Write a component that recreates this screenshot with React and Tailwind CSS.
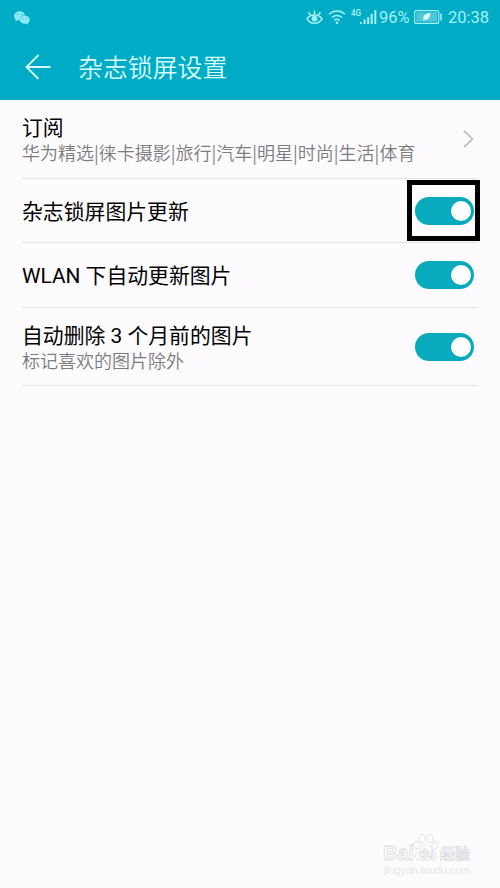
import { useState } from "react";

function StatusBar() {
  return (
    <div className="flex h-[34px] items-center justify-between pl-3.5 pr-[11px] text-[#a5f1f8]">
      <svg width="16" height="14" viewBox="0 0 16 14" className="mt-px">
        <ellipse cx="5.6" cy="4.9" rx="5.6" ry="4.6" fill="#8cecf6" />
        <path d="M1.8 8l-.6 2.5 3-1.5z" fill="#8cecf6" />
        <ellipse cx="10.8" cy="8.7" rx="5.2" ry="4.3" fill="#8cecf6" stroke="#00acc5" strokeWidth="0.5" />
        <path d="M12 12.4l2.3 1.3-.5-2.5z" fill="#8cecf6" />
        <g fill="#30b6ca">
          <circle cx="3.7" cy="3.5" r="0.7" />
          <circle cx="7.6" cy="3.5" r="0.7" />
          <circle cx="9.1" cy="7.6" r="0.6" />
          <circle cx="12.5" cy="7.6" r="0.6" />
        </g>
      </svg>
      <div className="flex items-center">
        <svg width="17" height="16" viewBox="0 0 17 16" fill="none" stroke="currentColor" strokeWidth="1.5">
          <path d="M1 9.800c3.500-5 11.500-5 15 0-3.500 6-11.500 6-15 0zM8.500 1.500v4M2.500 3.300l2.200 3M14.500 3.300l-2.200 3" />
          <circle cx="8.5" cy="9.6" r="2.900" fill="currentColor" stroke="none" />
        </svg>
        <svg width="18" height="16" viewBox="0 0 20 16" fill="none" stroke="currentColor" strokeWidth="1.7" className="ml-[5px]">
          <path d="M1.3 5c5-4.800 12.400-4.800 17.400 0M4.300 8.600c3.300-3 8.100-3 11.400 0M7 11.800c1.800-1.500 4.200-1.500 6 0" />
          <circle cx="10" cy="14.300" r="1.400" fill="currentColor" stroke="none" />
        </svg>
        <span className="mb-2 ml-[5px] w-[9px] origin-left scale-x-90 text-[9px] font-medium leading-none">4G</span>
        <svg width="17" height="16" viewBox="0 0 17 16" fill="currentColor">
          <path d="M0 13h1.800v2H0zM3.600 10.500h2V15h-2zM7.200 8h2v7h-2zM10.700 4.700h2V15h-2zM14.300 1h2v14h-2z" />
        </svg>
        <span className="ml-0.5 mt-0.5 w-[31px] text-[16.5px] leading-none">96%</span>
        <svg width="28" height="14" viewBox="0 0 28 14" className="ml-1" fill="none">
          <rect x="0.6" y="0.6" width="24.200" height="12.800" rx="2" stroke="currentColor" strokeWidth="1.100" />
          <rect x="2.300" y="2.300" width="20.800" height="9.400" fill="#4fc7d7" />
          <path d="M9.300 9.400c-.5-4 2.500-6 7-6.400-.2 4.700-2.200 7.500-6 6.800L9 11" fill="#dcfbff" />
          <path d="M27 3.500v7" stroke="currentColor" strokeWidth="1.500" />
        </svg>
        <span className="ml-1.5 mt-0.5 w-[41px] text-[16.5px] leading-none">20:38</span>
      </div>
    </div>
  );
}

function Toggle({ label }) {
  const [on, setOn] = useState(true);

  return (
    <button
      type="button"
      role="switch"
      aria-label={label}
      aria-checked={on}
      onClick={() => setOn(!on)}
      className={`flex h-7 w-[59px] items-center rounded-full px-[3px] ${
        on ? "justify-end bg-[#08aabe]" : "justify-start bg-gray-300"
      }`}
    >
      <span className="size-5 rounded-full bg-white" />
    </button>
  );
}

function Row({ title, subtitle, className, children }) {
  return (
    <div className={`flex items-center justify-between border-b border-[#e3e2e5] pr-1 ${className}`}>
      <div className="pt-0.5">
        <div className="text-[20.85px] leading-7 text-black">{title}</div>
        {subtitle && (
          <div className="-mt-0.5 mb-0.5 whitespace-nowrap font-['Noto_Sans_CJK_SC',sans-serif] text-[18px] font-[350] leading-6 text-[#7c7c7e]">
            {subtitle}
          </div>
        )}
      </div>
      {children}
    </div>
  );
}

function Watermark() {
  return (
    <div className="absolute left-[383px] top-[833px] font-['Liberation_Sans','Noto_Sans_CJK_SC',sans-serif]">
      <svg width="92" height="43" viewBox="0 0 92 43" fill="#fdfbfe" stroke="#dddce0" strokeWidth="0.8">
        <ellipse cx="34" cy="12" rx="3" ry="4" transform="rotate(-18 34 12)" />
        <ellipse cx="39" cy="5.500" rx="3" ry="4.200" />
        <ellipse cx="47" cy="5.500" rx="3" ry="4.200" />
        <ellipse cx="52" cy="12.500" rx="3" ry="4" transform="rotate(18 52 12.500)" />
        <path d="M43 12c-4 0-5 4-8 6.500-4 3.500-3 8.500 2 8.500h12c5 0 6-5 2-8.500-3-2.500-4-6.500-8-6.500z" />
        <text x="0" y="27" fontSize="21" fontWeight="700" textLength="31" lengthAdjust="spacingAndGlyphs">Bai</text>
        <text x="36" y="25" fontSize="12" fontWeight="700">du</text>
        <text x="57" y="26" fontSize="15" fontWeight="700">经验</text>
        <text x="1" y="41" fontSize="11" fill="#e5e4e7" stroke="none" textLength="86" lengthAdjust="spacingAndGlyphs">jingyan.baidu.com</text>
      </svg>
    </div>
  );
}

export default function App() {
  return (
    <div className="relative h-[888px] w-[500px] overflow-hidden bg-[#fdfbfe] font-['Roboto','Noto_Sans_CJK_SC',sans-serif]">
      <header className="h-[100px] bg-[#00acc5]">
        <StatusBar />
        <div className="flex h-[66px] items-center pl-[25px] text-[#d8faff]">
          <svg width="26" height="26" viewBox="0 0 26 26" fill="none" stroke="currentColor" strokeWidth="1.800">
            <path d="M25.500 13H1.500M13.500 1L1.500 13l12 12" />
          </svg>
          <h1 className="mb-0.5 ml-[27px] font-['Noto_Sans_CJK_SC',sans-serif] text-[24.9px] font-[350] leading-8">
            杂志锁屏设置
          </h1>
        </div>
      </header>

      <main className="px-[22px]">
        <Row
          title="订阅"
          subtitle="华为精选|徕卡摄影|旅行|汽车|明星|时尚|生活|体育"
          className="h-[79px]"
        >
          <svg width="11" height="18" viewBox="0 0 11 18" fill="none" stroke="#bdbcbf" strokeWidth="1.700">
            <path d="M1 .8L9.500 9 1 17.200" />
          </svg>
        </Row>
        <Row title="杂志锁屏图片更新" className="h-16">
          <Toggle label="杂志锁屏图片更新" />
        </Row>
        <Row title="WLAN 下自动更新图片" className="h-[65px]">
          <Toggle label="WLAN 下自动更新图片" />
        </Row>
        <Row title="自动删除 3 个月前的图片" subtitle="标记喜欢的图片除外" className="h-[78px]">
          <Toggle label="自动删除 3 个月前的图片" />
        </Row>
      </main>

      <div className="pointer-events-none absolute left-[407px] top-[180px] h-[61px] w-[73px] border-[5px] border-black" />
      <Watermark />
    </div>
  );
}
